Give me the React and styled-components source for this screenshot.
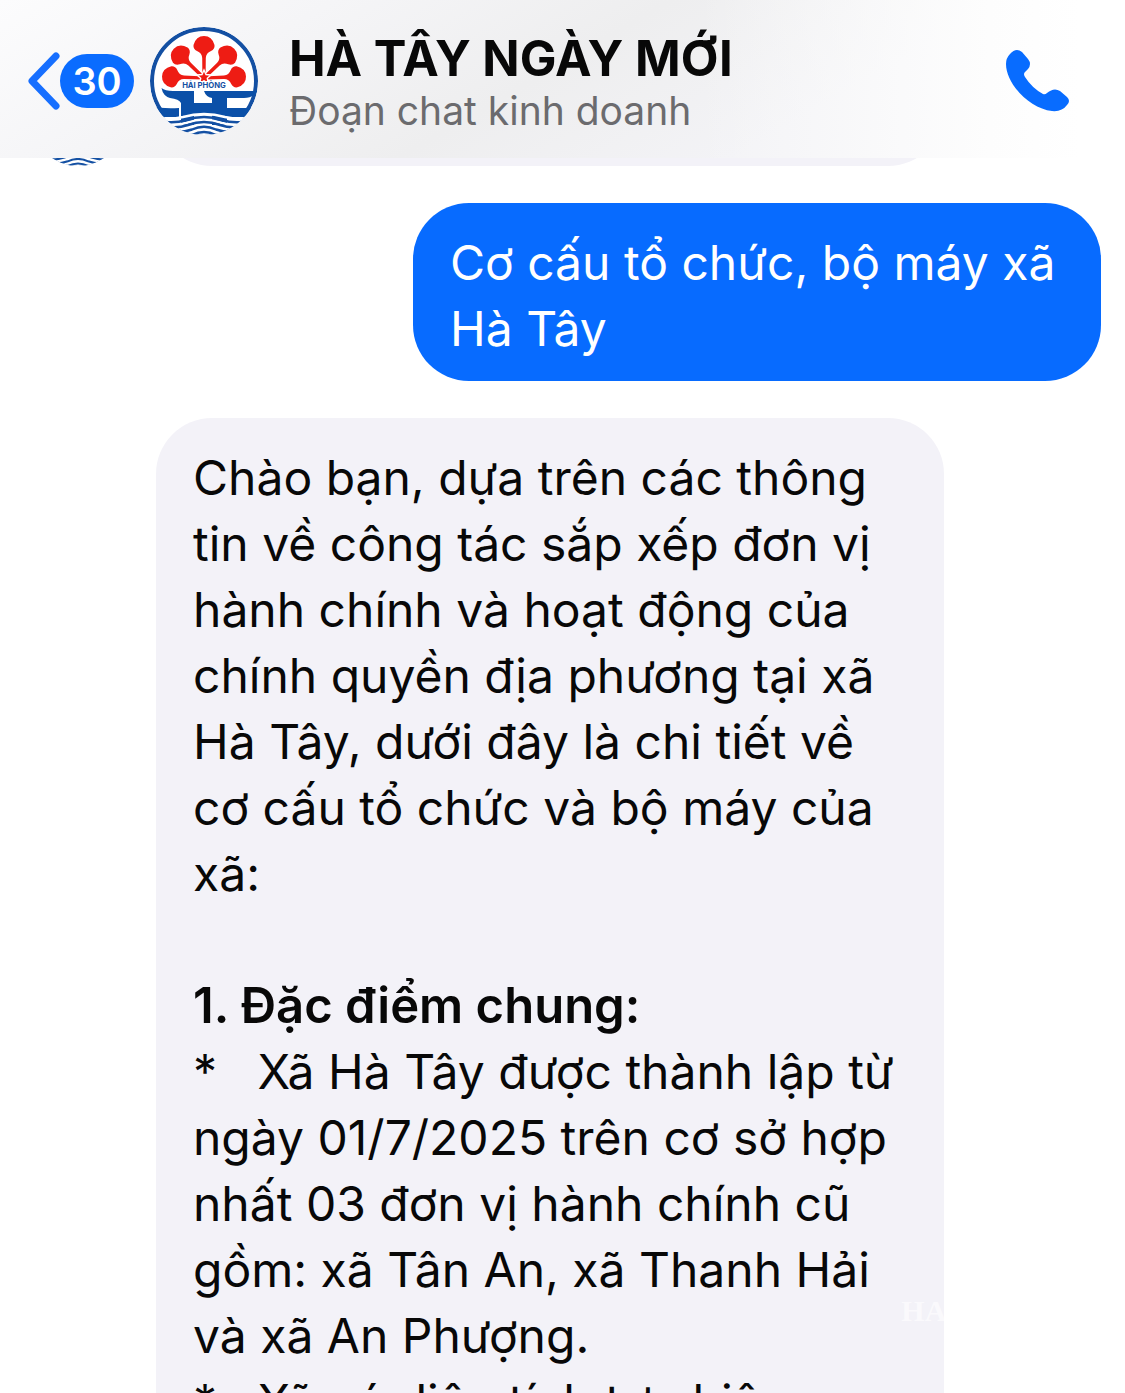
import React from 'react';
import styled, { createGlobalStyle } from 'styled-components';

const GlobalStyle = createGlobalStyle`
  * { box-sizing: border-box; }
  body { margin: 0; background: #fff; font-family: Inter, Roboto, 'Noto Sans', sans-serif; }
  button { font-family: inherit; }
`;

const Screen = styled.div`
  position: relative;
  display: flex;
  flex-direction: column;
  height: 100vh;
  overflow: hidden;
  color: #080808;
`;

const Header = styled.header`
  display: flex;
  align-items: center;
  flex: none;
  gap: 16px;
  height: 158px;
  padding: 4px 55px 0 28px;
  background:
    linear-gradient(90deg, transparent 62%, #fdfdfd 88%, #fff 96%),
    linear-gradient(150deg, #fcfcfd 0%, #f5f5f7 24%, #eeeeef 48%, #f3f3f6 72%);
`;

const BackButton = styled.button`
  display: flex;
  align-items: center;
  padding: 0;
  border: 0;
  background: none;
  cursor: pointer;
`;

const UnreadCount = styled.span`
  width: 74px;
  border-radius: 27px;
  background: #0a6cff;
  color: #fff;
  font-size: 38px;
  font-weight: 600;
  line-height: 54px;
  text-align: center;
`;

const Identity = styled.div`
  flex: 1;
  padding: 4px 0 0 15px;
  white-space: nowrap;
`;

const Title = styled.h1`
  margin: 0;
  font-size: 49px;
  font-weight: 700;
  line-height: 56px;
`;

const Subtitle = styled.p`
  margin: 0;
  color: #6b6b6e;
  font-size: 39px;
  line-height: 48px;
`;

const CallButton = styled.button`
  display: flex;
  padding: 0;
  border: 0;
  background: none;
  cursor: pointer;
`;

const Messages = styled.main`
  display: flex;
  flex: 1;
  flex-direction: column;
  gap: 37px;
  min-height: 0;
  overflow: hidden;
  padding: 0 24px 0 32px;
`;

const ScrolledRow = styled.div`
  display: flex;
  flex: none;
  align-items: flex-end;
  gap: 32px;
  height: 8px;
  overflow: hidden;
`;

const Row = styled.div`
  display: flex;
  flex: none;
  justify-content: ${({ $own }) => ($own ? 'flex-end' : 'flex-start')};
  padding-left: ${({ $own }) => ($own ? 0 : '124px')};
`;

const Bubble = styled.div`
  width: ${({ $own }) => ($own ? '688px' : '788px')};
  max-width: 100%;
  min-height: 120px;
  padding: 27px 0 19px 37px;
  border-radius: 56px;
  background: ${({ $own }) => ($own ? '#076bff' : '#f3f2f8')};
  color: ${({ $own }) => ($own ? '#fff' : '#080808')};
  font-size: 48px;
  line-height: 66px;
`;

const Paragraph = styled.p`
  margin: 0;
  white-space: pre-wrap;
`;

const Heading = styled.h2`
  margin: 66px 0 0;
  font-size: 49px;
  font-weight: 600;
  line-height: 66px;
`;

const Watermark = styled.div`
  position: absolute;
  right: 57px;
  bottom: 67px;
  color: #fff;
  font-family: 'Liberation Serif', serif;
  font-size: 30px;
  font-weight: 700;
  line-height: 30px;
  opacity: 0.6;
`;

const PETAL_ANGLES = [-88, -46, 0, 46, 88];

function Logo({ size, named }) {
  const clip = `disc${size}`;
  return (
    <svg width={size} height={size} viewBox="0 0 108 108" role="img" aria-label="Hải Phòng">
      <defs>
        <clipPath id={clip}><circle cx="54" cy="54" r="54" /></clipPath>
      </defs>
      <g clipPath={`url(#${clip})`}>
        <circle cx="54" cy="54" r="54" fill="#fff" />
        <circle cx="54" cy="54" r="52" fill="none" stroke="#1450a3" strokeWidth="4" />
        {PETAL_ANGLES.map((angle) => (
          <path
            key={angle}
            transform={`translate(54 51) rotate(${angle})`}
            fill="#ee1c14"
            d="M-1.6 0L-1.8-20Q-2-25-7-27Q-11-29-10.5-33Q-8-42 0-42Q8-42 10.5-33Q11-29 7-27Q2-25 1.8-20L1.6 0Z"
          />
        ))}
        <path d="M54 43l2 4.5 5 .5-3.7 3.3 1 5-4.3-2.6-4.3 2.6 1-5L47 48l5-.5z" fill="#ee1c14" stroke="#fff" strokeWidth="1.4" />
        {named && (
          <>
            <path d="M32 54H76V63H32Z" fill="#fff" />
            <text x="54" y="61" textAnchor="middle" fontFamily="Inter, sans-serif" fontSize="7.7" fontWeight="700" fill="#1450a3">HẢI PHÒNG</text>
          </>
        )}
        <path d="M0 89H108V108H0Z" fill="#fff" />
        <path d="M11.5 61Q15 64 23 64H44V76H62V71Q56 70 54 64H108L104 68Q100 71 94 71H77V81H102L97 90H77V98H62V87H44V98H31V76Q29 72 20 71Q13 69 11.5 61Z" fill="#0b50a8" />
        <path d="M3 79Q11 82 29 81V90H10Z" fill="#0b50a8" />
        <g fill="none">
          <path d="M8 93Q20 93 33 90Q54 84 75 90Q88 93 100 93" stroke="#fff" strokeWidth="2.4" />
          <path d="M12 98Q26 99 36 96Q54 90 72 96Q82 99 96 98" stroke="#fff" strokeWidth="2.4" />
          <path d="M16 95Q27 96 36 93Q54 87 72 93Q81 96 92 95" stroke="#1450a3" strokeWidth="2.6" />
          <path d="M20 100Q29 101 38 98Q54 92 70 98Q79 101 88 100" stroke="#1450a3" strokeWidth="2.6" />
          <path d="M28 105Q35 105 42 102.5Q54 97 66 102.5Q73 105 80 105" stroke="#1450a3" strokeWidth="2.4" />
          <path d="M42 108Q54 102 66 108" stroke="#1450a3" strokeWidth="2.4" />
        </g>
      </g>
    </svg>
  );
}

export default function App() {
  return (
    <>
      <GlobalStyle />
      <Screen>
        <Header>
          <BackButton aria-label="Quay lại, 30">
            <svg width="32" height="58" viewBox="0 0 32 58" fill="none" stroke="#176fff" strokeWidth="7" strokeLinecap="round" strokeLinejoin="round">
              <path d="M28 4L4 29L28 54" />
            </svg>
            <UnreadCount>30</UnreadCount>
          </BackButton>
          <Logo size={108} named />
          <Identity>
            <Title>HÀ TÂY NGÀY MỚI</Title>
            <Subtitle>Đoạn chat kinh doanh</Subtitle>
          </Identity>
          <CallButton aria-label="Gọi">
            <svg width="64" height="64" viewBox="0 0 64 64" fill="#086cff">
              <path d="M4 5Q10-2 16 3L22 10Q26 15 22 20L19 23Q17 25 19 28Q26 39 37 45Q39 46 41 44Q48 38 54 42L61 48Q65 52 61 56Q56 63 46 62C24 60 0 35 0 15Q0 9 4 5Z" />
            </svg>
          </CallButton>
        </Header>
        <Messages>
          <ScrolledRow>
            <Logo size={92} />
            <Bubble />
          </ScrolledRow>
          <Row $own>
            <Bubble $own>
              <Paragraph>{'Cơ cấu tổ chức, bộ máy xã\nHà Tây'}</Paragraph>
            </Bubble>
          </Row>
          <Row>
            <Bubble>
              <Paragraph>{'Chào bạn, dựa trên các thông\ntin về công tác sắp xếp đơn vị\nhành chính và hoạt động của\nchính quyền địa phương tại xã\nHà Tây, dưới đây là chi tiết về\ncơ cấu tổ chức và bộ máy của\nxã:'}</Paragraph>
              <Heading>1. Đặc điểm chung:</Heading>
              <Paragraph>{'*   Xã Hà Tây được thành lập từ\nngày 01/7/2025 trên cơ sở hợp\nnhất 03 đơn vị hành chính cũ\ngồm: xã Tân An, xã Thanh Hải\nvà xã An Phượng.\n*   Xã có diện tích tự nhiên'}</Paragraph>
            </Bubble>
          </Row>
        </Messages>
        <Watermark aria-hidden="true">HAIPHONG</Watermark>
      </Screen>
    </>
  );
}
